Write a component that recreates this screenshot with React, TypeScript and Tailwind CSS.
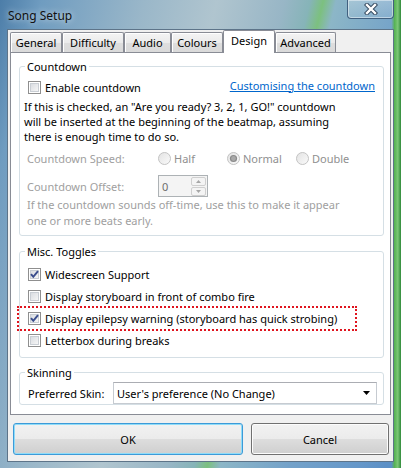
import React from "react";

const FONT = "font-['Noto_Sans',sans-serif]";

function CheckBox({ checked = false }: { checked?: boolean }) {
  return (
    <svg width="13" height="13" viewBox="0 0 13 13" className="shrink-0">
      <defs>
        <linearGradient id="cbfill" x1="0" y1="0" x2="1" y2="1">
          <stop offset="0" stopColor="#d8dbe0" />
          <stop offset="1" stopColor="#f7f7f7" />
        </linearGradient>
      </defs>
      <rect x="0.5" y="0.5" width="12" height="12" fill="#fff" stroke="#8f8f8f" />
      <rect x="2.5" y="2.5" width="8" height="8" fill="url(#cbfill)" stroke="#c9ced4" />
      {checked && (
        <path d="M3 6.2 L5.3 8.8 L10 3.2" fill="none" stroke="#3b4e8d" strokeWidth="2" />
      )}
    </svg>
  );
}

function Radio({ checked = false }: { checked?: boolean }) {
  return (
    <svg width="13" height="13" viewBox="0 0 13 13" className="shrink-0">
      <defs>
        <linearGradient id="rdfill" x1="0" y1="0" x2="1" y2="1">
          <stop offset="0" stopColor="#e2e2e2" />
          <stop offset="1" stopColor="#fbfbfb" />
        </linearGradient>
      </defs>
      <circle cx="6.5" cy="6.5" r="6" fill="url(#rdfill)" stroke="#c3c3c3" />
      {checked && (
        <>
          <circle cx="6.5" cy="6.5" r="3.6" fill="#8a8a8a" />
          <circle cx="6.5" cy="6.5" r="2.4" fill="#a9a9a9" />
        </>
      )}
    </svg>
  );
}

function RadioItem({ label, checked }: { label: string; checked?: boolean }) {
  return (
    <div className="flex w-[69px] items-center gap-[3px]">
      <Radio checked={checked} />
      <span className="text-[#8f8f8f]">{label}</span>
    </div>
  );
}

function Group({
  title,
  className,
  children,
}: {
  title: string;
  className?: string;
  children: React.ReactNode;
}) {
  return (
    <fieldset className={`rounded-[3px] border border-[#d5dfe5] ${className ?? ""}`}>
      <legend className="ml-[5px] px-[2px] leading-[15px]">{title}</legend>
      {children}
    </fieldset>
  );
}

const tabs = [
  { label: "General", w: "w-[52px]" },
  { label: "Difficulty", w: "w-[62px]" },
  { label: "Audio", w: "w-[47px]" },
  { label: "Colours", w: "w-[52px]" },
  { label: "Design", w: "w-[52px]", active: true },
  { label: "Advanced", w: "w-[61px]" },
];

function Tabs() {
  return (
    <div className="flex h-[22px] shrink-0 items-end">
      {tabs.map((t) =>
        t.active ? (
          <div
            key={t.label}
            className={`${t.w} relative z-10 -mb-px flex h-[23px] items-center justify-center rounded-t-[2px] border border-b-0 border-[#898c95] bg-white pb-[3px]`}
          >
            {t.label}
          </div>
        ) : (
          <div
            key={t.label}
            className={`${t.w} flex h-[20px] items-center justify-center rounded-t-[2px] border border-b-0 border-[#898c95] bg-[linear-gradient(#f4f4f4,#ebebeb_50%,#dedede_51%,#dadada)] shadow-[inset_1px_1px_0_#fff]`}
          >
            {t.label}
          </div>
        )
      )}
    </div>
  );
}

function CloseButton() {
  return (
    <div className="flex h-[19px] w-[47px] items-center justify-center rounded-b-[4px] border border-t-0 border-[#41607f] bg-[linear-gradient(rgba(255,255,255,0.25),rgba(255,255,255,0.1))] shadow-[inset_0_0_0_1px_rgba(255,255,255,0.45)]">
      <svg width="14" height="12" viewBox="0 0 14 12">
        <path d="M3 2 L11 10 M11 2 L3 10" stroke="#34495f" strokeWidth="4.4" strokeLinecap="square" />
        <path d="M3 2 L11 10 M11 2 L3 10" stroke="#fff" strokeWidth="2.4" strokeLinecap="square" />
      </svg>
    </div>
  );
}

function CheckRow({ label, checked }: { label: string; checked?: boolean }) {
  return (
    <div className="flex h-[22px] items-center gap-[4px] pl-[8px]">
      <CheckBox checked={checked} />
      <span className="whitespace-nowrap">{label}</span>
    </div>
  );
}

export default function App() {
  return (
    <div
      className={`${FONT} flex h-[468px] w-[401px] flex-col px-[7px] pb-[6px] text-[11px] leading-[15px] text-black bg-[linear-gradient(90deg,rgba(0,0,0,0)_97.6%,#57b353_98.4%,#7cc777_99.2%,#2f8a3a_100%),linear-gradient(104deg,#4c7da8_0%,#6f9cc0_8%,#9ab7c9_28%,#b0c5cf_42%,#98b6c6_55%,#86b4b8_60%,#7cc07f_62.5%,#8cb6c7_65%,#74a2c9_78%,#6597c9_92%,#5c90c6_97%)]`}
    >
      <div className="flex h-[29px] shrink-0 items-start justify-between">
        <span className="pl-[1px] pt-[8px] text-[12px] text-[#111] [text-shadow:0_0_6px_rgba(255,255,255,0.8)]">
          Song Setup
        </span>
        <CloseButton />
      </div>

      <div className="flex flex-1 flex-col border border-[#5d7489] bg-[#f0f0f0] px-[2px]">
        <Tabs />

        <div className="flex flex-1 flex-col border border-[#898c95] bg-white pl-[8px] pr-[6px] pt-[6px]">
          <Group title="Countdown" className="pb-[6px]">
            <div className="mt-[5px] flex h-[16px] items-center gap-[4px] pl-[8px] pr-[8px]">
              <CheckBox />
              <span>Enable countdown</span>
              <span className="mb-[4px] ml-auto text-[#0066cc] underline">
                Customising the countdown
              </span>
            </div>
            <p className="mt-[4px] whitespace-nowrap pl-[4px]">
              If this is checked, an "Are you ready? 3, 2, 1, GO!" countdown
              <br />
              will be inserted at the beginning of the beatmap, assuming
              <br />
              there is enough time to do so.
            </p>
            <div className="mt-[6px] flex h-[16px] items-center pl-[7px]">
              <span className="w-[131px] text-[#a0a0a0]">Countdown Speed:</span>
              <RadioItem label="Half" />
              <RadioItem label="Normal" checked />
              <RadioItem label="Double" />
            </div>
            <div className="mt-[9px] flex h-[22px] items-center pl-[7px]">
              <span className="w-[131px] text-[#a0a0a0]">Countdown Offset:</span>
              <div className="flex h-[22px] w-[50px] items-center justify-between border border-[#adb2b5] bg-[#f4f4f4] pl-[3px] pr-[1px]">
                <span className="text-[#6d6d6d]">0</span>
                <div className="flex flex-col gap-px">
                  <div className="flex h-[9px] w-[15px] items-center justify-center rounded-[2px] border border-[#cfcfcf] bg-[#f4f4f4]">
                    <svg width="5" height="3" viewBox="0 0 5 3">
                      <path d="M0 3 L2.5 0 L5 3 Z" fill="#a6a6a6" />
                    </svg>
                  </div>
                  <div className="flex h-[9px] w-[15px] items-center justify-center rounded-[2px] border border-[#cfcfcf] bg-[#f4f4f4]">
                    <svg width="5" height="3" viewBox="0 0 5 3">
                      <path d="M0 0 L2.5 3 L5 0 Z" fill="#a6a6a6" />
                    </svg>
                  </div>
                </div>
              </div>
            </div>
            <p className="whitespace-nowrap pl-[7px] leading-[16px] text-[#a0a0a0]">
              If the countdown sounds off-time, use this to make it appear
              <br />
              one or more beats early.
            </p>
          </Group>

          <Group title="Misc. Toggles" className="mt-[8px] pb-[6px]">
            <div className="mt-[4px] flex flex-col">
              <CheckRow label="Widescreen Support" checked />
              <CheckRow label="Display storyboard in front of combo fire" />
              <div className="relative">
                <CheckRow label="Display epilepsy warning (storyboard has quick strobing)" checked />
                <div className="absolute left-[-3px] top-[-1px] h-[25px] w-[340px] border-2 border-dotted border-[#e0141e]" />
              </div>
              <CheckRow label="Letterbox during breaks" />
            </div>
          </Group>

          <Group title="Skinning" className="mt-[7px]">
            <div className="mt-[2px] flex h-[22px] items-center pl-[8px]">
              <span className="w-[85px]">Preferred Skin:</span>
              <div className="flex h-[22px] w-[264px] items-center justify-between border border-[#c6cbd1] border-t-[#abadb3] bg-white pl-[3px] pr-[6px]">
                <span>User's preference (No Change)</span>
                <svg width="7" height="4" viewBox="0 0 7 4">
                  <path d="M0 0 L7 0 L3.5 4 Z" fill="#000" />
                </svg>
              </div>
            </div>
          </Group>
        </div>

        <div className="flex shrink-0 gap-[8px] pb-[6px] pl-[3px] pt-[8px]">
          <button className="h-[32px] w-[230px] rounded-[3px] border border-[#3c9ad8] bg-[linear-gradient(#f2f2f2,#ebebeb_50%,#dddddd_51%,#cfcfcf)] shadow-[inset_0_0_0_1px_#8fdcf8]">
            OK
          </button>
          <button className="h-[32px] w-[138px] rounded-[3px] border border-[#707070] bg-[linear-gradient(#f2f2f2,#ebebeb_50%,#dddddd_51%,#cfcfcf)] shadow-[inset_0_0_0_1px_#fcfcfc]">
            Cancel
          </button>
        </div>
      </div>
    </div>
  );
}
